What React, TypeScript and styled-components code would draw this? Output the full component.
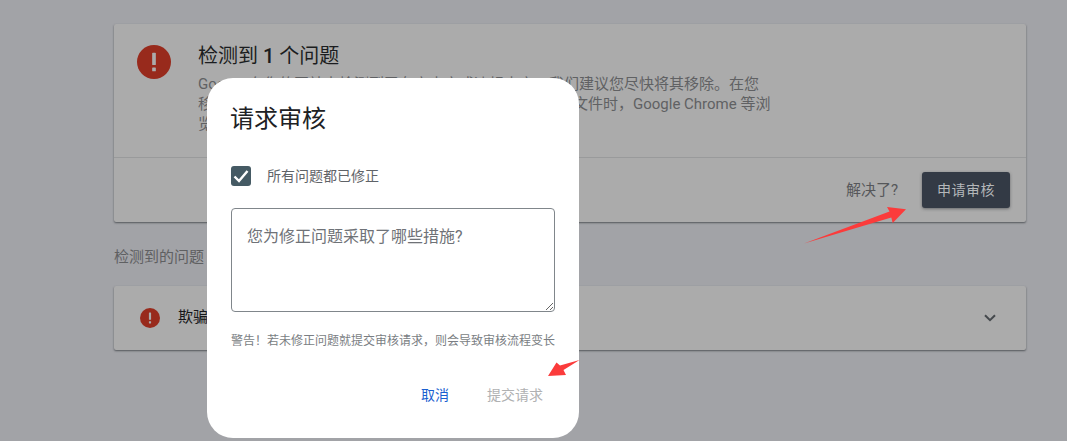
import React from "react";
import styled, { createGlobalStyle } from "styled-components";

const Global = createGlobalStyle`
  html, body { margin: 0; padding: 0; background: #a2a3a7; }
  body { font-family: Roboto, "Noto Sans CJK SC", sans-serif; width: 1067px; height: 441px; overflow: hidden; }
  * { box-sizing: border-box; }
`;

const Page = styled.div`
  position: relative;
  width: 1067px;
  height: 441px;
  overflow: hidden;
  padding: 24px 41px 0 114px;
  background: #a2a3a7;
`;

const Card = styled.section`
  background: #ababab;
  border-radius: 2px;
  box-shadow: 0 1px 2px rgba(50, 54, 58, 0.7);
`;

const SummaryBody = styled.div`
  height: 134px;
  padding: 21px 0 0 23px;
  display: flex;
  gap: 27px;
  border-bottom: 1px solid #999a9b;
`;

const SummaryText = styled.div`
  width: 590px;
`;

const SummaryTitle = styled.h2`
  margin: 0 0 7px;
  font-size: 20px;
  line-height: 22px;
  font-weight: 400;
  color: #1b1d20;
  white-space: pre;
`;

const Count = styled.span`
  font-weight: 500;
`;

const SummaryLine = styled.div`
  font-size: 15px;
  line-height: 20px;
  color: #606163;
  white-space: nowrap;
`;

const SummaryActions = styled.div`
  height: 64px;
  padding: 14px 16px 0 0;
  display: flex;
  justify-content: flex-end;
  align-items: flex-start;
  gap: 24px;
`;

const Solved = styled.span`
  font-size: 15px;
  line-height: 36px;
  color: #56575a;
`;

const ReviewButton = styled.button`
  width: 88px;
  height: 36px;
  border: 0;
  border-radius: 3px;
  background: #333a45;
  color: #b4b7ba;
  font: 400 14px/36px Roboto, "Noto Sans CJK SC", sans-serif;
  letter-spacing: 0.5px;
  padding: 0;
  box-shadow: 0 1px 3px rgba(40, 44, 50, 0.5);
`;

const SectionLabel = styled.div`
  margin-top: 24px;
  font-size: 15px;
  line-height: 22px;
  color: #5f6062;
`;

const IssueCard = styled(Card)`
  margin-top: 18px;
  height: 64px;
  display: flex;
  align-items: center;
  padding: 0 30px 0 26px;
  gap: 18px;
`;

const IssueName = styled.span`
  flex: 1;
  font-size: 15px;
  line-height: 20px;
  padding-bottom: 3px;
  color: #17181a;
`;

const Dialog = styled.div`
  position: absolute;
  left: 207px;
  top: 78px;
  width: 372px;
  height: 360px;
  padding: 25px 24px 0 23px;
  background: #fff;
  border-radius: 26px;
`;

const DialogTitle = styled.h3`
  margin: 0;
  font-size: 24px;
  line-height: 32px;
  font-weight: 400;
  color: #202124;
`;

const DialogBody = styled.div`
  padding-left: 1px;
`;

const CheckRow = styled.label`
  margin-top: 31px;
  display: flex;
  align-items: center;
  gap: 16px;
  height: 20px;
  font-size: 14px;
  color: #5f6368;
`;

const CheckLabel = styled.span`
  padding-bottom: 2px;
`;

const CheckBox = styled.span`
  width: 20px;
  height: 20px;
  border-radius: 3px;
  background: #455a64;
  display: flex;
  align-items: center;
  justify-content: center;
`;

const Notes = styled.textarea`
  display: block;
  margin-top: 22px;
  width: 324px;
  height: 104px;
  padding: 17px 15px;
  border: 1px solid #80868b;
  border-radius: 4px;
  font: 400 16px/22px Roboto, "Noto Sans CJK SC", sans-serif;
  outline: none;
  background: #fff;
  &::placeholder { color: #6f7277; opacity: 1; }
`;

const Warning = styled.p`
  margin: 20px 0 0;
  font-size: 12px;
  line-height: 18px;
  color: #7a7e83;
  white-space: nowrap;
`;

const DialogActions = styled.div`
  margin-top: 35px;
  display: flex;
  justify-content: flex-end;
  gap: 38px;
  padding-right: 12px;
`;

const TextButton = styled.button<{ $disabled?: boolean }>`
  border: 0;
  padding: 0;
  background: none;
  font: 400 14px/20px Roboto, "Noto Sans CJK SC", sans-serif;
  color: ${(p) => (p.$disabled ? "#b0b1b2" : "#1a5fd0")};
`;

const Arrow = styled.svg`
  position: absolute;
  left: 0;
  top: 0;
  pointer-events: none;
`;

const ErrorIcon = ({ size }: { size: number }) => (
  <svg width={size} height={size} viewBox="0 0 24 24" style={{ flex: "none" }}>
    <circle cx="12" cy="12" r="12" fill="#982a1c" />
    <rect x="10.7" y="5.4" width="2.6" height="8.8" rx="0.5" fill="#ababab" />
    <rect x="10.7" y="15.8" width="2.6" height="2.8" rx="0.5" fill="#ababab" />
  </svg>
);

export default function App() {
  return (
    <Page>
      <Global />
      <Card>
        <SummaryBody>
          <ErrorIcon size={34} />
          <SummaryText>
            <SummaryTitle>检测到 <Count>1</Count> 个问题</SummaryTitle>
            <SummaryLine>Google 在您的网站上检测到了有害内容或违规内容。我们建议您尽快将其移除。在您</SummaryLine>
            <SummaryLine>移除这些内容之前，当用户正在访问您的网站或下载相关文件时，Google Chrome 等浏</SummaryLine>
            <SummaryLine>览器可能会显示警告。</SummaryLine>
          </SummaryText>
        </SummaryBody>
        <SummaryActions>
          <Solved>解决了?</Solved>
          <ReviewButton>申请审核</ReviewButton>
        </SummaryActions>
      </Card>
      <SectionLabel>检测到的问题</SectionLabel>
      <IssueCard>
        <ErrorIcon size={20} />
        <IssueName>欺骗性网页</IssueName>
        <svg width="12" height="8" viewBox="0 0 12 8">
          <path d="M1 1.2 6 6.2l5-5" fill="none" stroke="#45494d" strokeWidth="2" />
        </svg>
      </IssueCard>
      <Dialog>
        <DialogTitle>请求审核</DialogTitle>
        <DialogBody>
          <CheckRow>
            <CheckBox>
              <svg width="18" height="16" viewBox="0 0 18 16">
                <path d="M2.5 8.5 7 13 15.5 3" fill="none" stroke="#fff" strokeWidth="2.4" />
              </svg>
            </CheckBox>
            <CheckLabel>所有问题都已修正</CheckLabel>
          </CheckRow>
          <Notes placeholder="您为修正问题采取了哪些措施?" />
          <Warning>警告！若未修正问题就提交审核请求，则会导致审核流程变长</Warning>
          <DialogActions>
            <TextButton>取消</TextButton>
            <TextButton $disabled>提交请求</TextButton>
          </DialogActions>
        </DialogBody>
      </Dialog>
      <Arrow width="1067" height="441" viewBox="0 0 1067 441">
        <polygon points="804,243.5 889.5,211.5 887,207 906,209.3 892.7,223 891.3,217.5" fill="#fb3b3b" />
        <polygon points="579.5,360 560,365.5 556.5,362.5 548,376 566,375 563.5,370" fill="#fb3b3b" />
      </Arrow>
    </Page>
  );
}
